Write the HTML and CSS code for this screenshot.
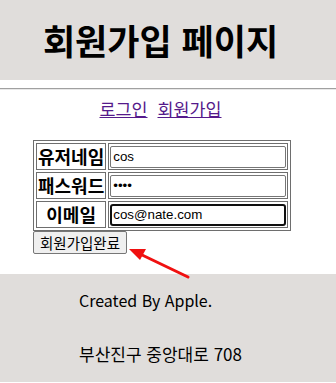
FILE: index.html
```html
<!DOCTYPE html>
<html lang="ko">
<head>
<meta charset="utf-8">
<title>회원가입 페이지</title>
<link rel="stylesheet" href="styles.css">
</head>
<body>
<header class="top">
  <h1 class="title">회원가입 페이지</h1>
</header>
<hr class="rule">
<nav class="links">
  <a class="link link-first" href="#">로그인</a><a class="link" href="#">회원가입</a>
</nav>
<form class="form">
  <table class="grid">
    <tr>
      <th class="label">유저네임</th>
      <td class="cell"><input class="field" type="text" value="cos"></td>
    </tr>
    <tr>
      <th class="label">패스워드</th>
      <td class="cell"><input class="field" type="password" value="1234"></td>
    </tr>
    <tr>
      <th class="label">이메일</th>
      <td class="cell"><input class="field field-focus" type="text" value="cos@nate.com"></td>
    </tr>
  </table>
  <button class="submit" type="button">회원가입완료</button>
</form>
<footer class="bottom">
  <p class="foot-line">Created By Apple.</p>
  <p class="foot-line foot-addr">부산진구 중앙대로 708</p>
</footer>
<svg class="arrow" width="336" height="383" viewBox="0 0 336 383">
  <line x1="188" y1="277" x2="140" y2="254" stroke="#f01010" stroke-width="3" stroke-linecap="round"/>
  <polygon points="129,249 146,249 140,260" fill="#f01010"/>
</svg>
</body>
</html>
```
FILE: styles.css
```css
html, body {
  margin: 0;
  padding: 0;
  background: #ffffff;
}
body {
  position: relative;
  width: 336px;
  height: 383px;
  overflow: hidden;
  font-family: "Noto Sans CJK KR", "Noto Sans", sans-serif;
  font-size: 16px;
  color: #000;
}
.top {
  background: #e0dddb;
  padding: 21px 0;
}
.title {
  margin: 0;
  width: 321px;
  text-align: center;
  font-size: 35px;
  font-weight: 700;
  line-height: 38px;
}
.rule {
  margin: 8px 0;
  height: 0;
  border: 0;
  border-top: 1px solid #a0a0a0;
  border-bottom: 1px solid #e8e8e8;
}
.links {
  width: 321px;
  text-align: center;
  font-size: 17.4px;
  line-height: 21px;
  height: 21px;
}
.link {
  color: #551a8b;
  text-decoration: underline;
}
.link-first {
  margin-right: 10px;
}
.form {
  margin: 21px 0 0 33px;
}
.grid {
  border: 1px solid #6e6e6e;
  border-spacing: 2px;
}
.label {
  border: 1px solid #6e6e6e;
  padding: 1px;
  font-size: 18px;
  font-weight: 700;
  line-height: 23px;
  text-align: center;
  white-space: nowrap;
}
.cell {
  border: 1px solid #6e6e6e;
  padding: 1px;
  line-height: 23px;
}
.field {
  display: block;
  box-sizing: border-box;
  width: 176px;
  height: 22px;
  margin: 0;
  padding: 1px 2px;
  border: 1px solid #767676;
  border-radius: 2px;
  font-family: "Liberation Sans", Arial, sans-serif;
  font-size: 13.33px;
  color: #000;
  background: #fff;
}
.field-focus {
  border: 2px solid #101010;
  border-radius: 3px;
  padding: 0 1px;
}
.submit {
  display: block;
  margin: 0;
  height: 23px;
  padding: 0 6px;
  border: 1px solid #767676;
  border-radius: 2px;
  background: #efefef;
  font-family: "Noto Sans CJK KR", sans-serif;
  font-size: 14.5px;
  line-height: 19px;
  color: #000;
}
.bottom {
  margin-top: 20px;
  background: #e0dddb;
  height: 108px;
  padding: 16px 0 0 79px;
  box-sizing: border-box;
}
.foot-line {
  margin: 0;
  font-size: 16px;
  line-height: 21px;
}
.foot-addr {
  margin-top: 32px;
  font-size: 17px;
}
.arrow {
  position: absolute;
  left: 0;
  top: 0;
  pointer-events: none;
}
```
